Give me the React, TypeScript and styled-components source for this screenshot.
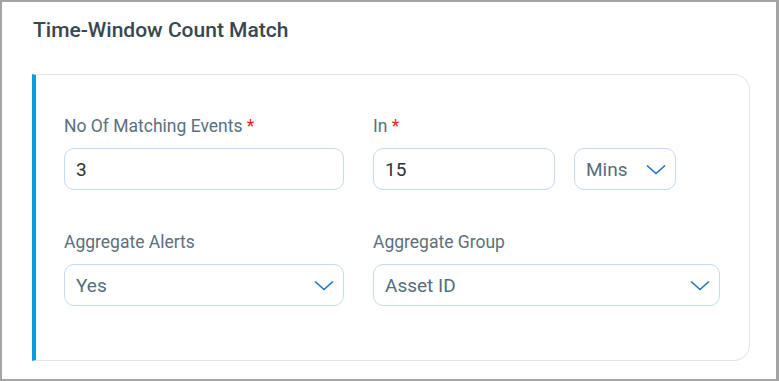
import React from "react";
import { styled, createGlobalStyle } from "styled-components";

const GlobalStyle = createGlobalStyle`
	body {
		margin: 0;
		font-family: Roboto, "Liberation Sans", sans-serif;
		background: #ffffff;
	}
	* { box-sizing: border-box; }
`;

const Frame = styled.div`
	width: 779px;
	height: 381px;
	border: 2px solid #a4a4a4;
	border-right-width: 3px;
	padding: 16px 0 0 30px;
	background: #fff;
`;

const Title = styled.h2`
	margin: 0 0 0 1px;
	font-size: 21px;
	line-height: 24px;
	font-weight: 500;
	color: #37474f;
`;

const Card = styled.div`
	margin-top: 32px;
	width: 718px;
	height: 287px;
	border: 1px solid #e2e6e9;
	border-left: 4px solid #0a9de6;
	border-radius: 0 16px 16px 0;
	padding: 41px 28px 0 28px;
`;

const Grid = styled.div`
	display: grid;
	grid-template-columns: 280px 347px;
	column-gap: 29px;
	row-gap: 42px;
`;

const Field = styled.div`
	display: flex;
	flex-direction: column;
	gap: 12px;
`;

const Label = styled.label`
	font-size: 17.5px;
	line-height: 20px;
	color: #5b6f7c;
	span { color: #e0261b; }
`;

const Controls = styled.div`
	display: flex;
	gap: 19px;
`;

const Box = styled.div<{ $width?: number; $muted?: boolean }>`
	width: ${(p) => (p.$width ? `${p.$width}px` : "100%")};
	height: 42px;
	border: 1px solid #c3daf0;
	border-radius: 10px;
	padding: 0 9px 0 11px;
	display: flex;
	align-items: center;
	justify-content: space-between;
	font-size: 19px;
	color: ${(p) => (p.$muted ? "#546e7a" : "#2e3236")};
`;

const Chevron = () => (
	<svg width="20" height="11" viewBox="0 0 20 11" fill="none">
		<path d="M1 1.5 L10 9.5 L19 1.5" stroke="#1f6fc1" strokeWidth="1.6" />
	</svg>
);

export default function App() {
	return (
		<>
			<GlobalStyle />
			<Frame>
				<Title>Time-Window Count Match</Title>
				<Card>
					<Grid>
						<Field>
							<Label>No Of Matching Events <span>*</span></Label>
							<Box>3</Box>
						</Field>
						<Field>
							<Label>In <span>*</span></Label>
							<Controls>
								<Box $width={182}>15</Box>
								<Box $width={102} $muted>Mins<Chevron /></Box>
							</Controls>
						</Field>
						<Field>
							<Label>Aggregate Alerts</Label>
							<Box $muted>Yes<Chevron /></Box>
						</Field>
						<Field>
							<Label>Aggregate Group</Label>
							<Box $muted>Asset ID<Chevron /></Box>
						</Field>
					</Grid>
				</Card>
			</Frame>
		</>
	);
}
